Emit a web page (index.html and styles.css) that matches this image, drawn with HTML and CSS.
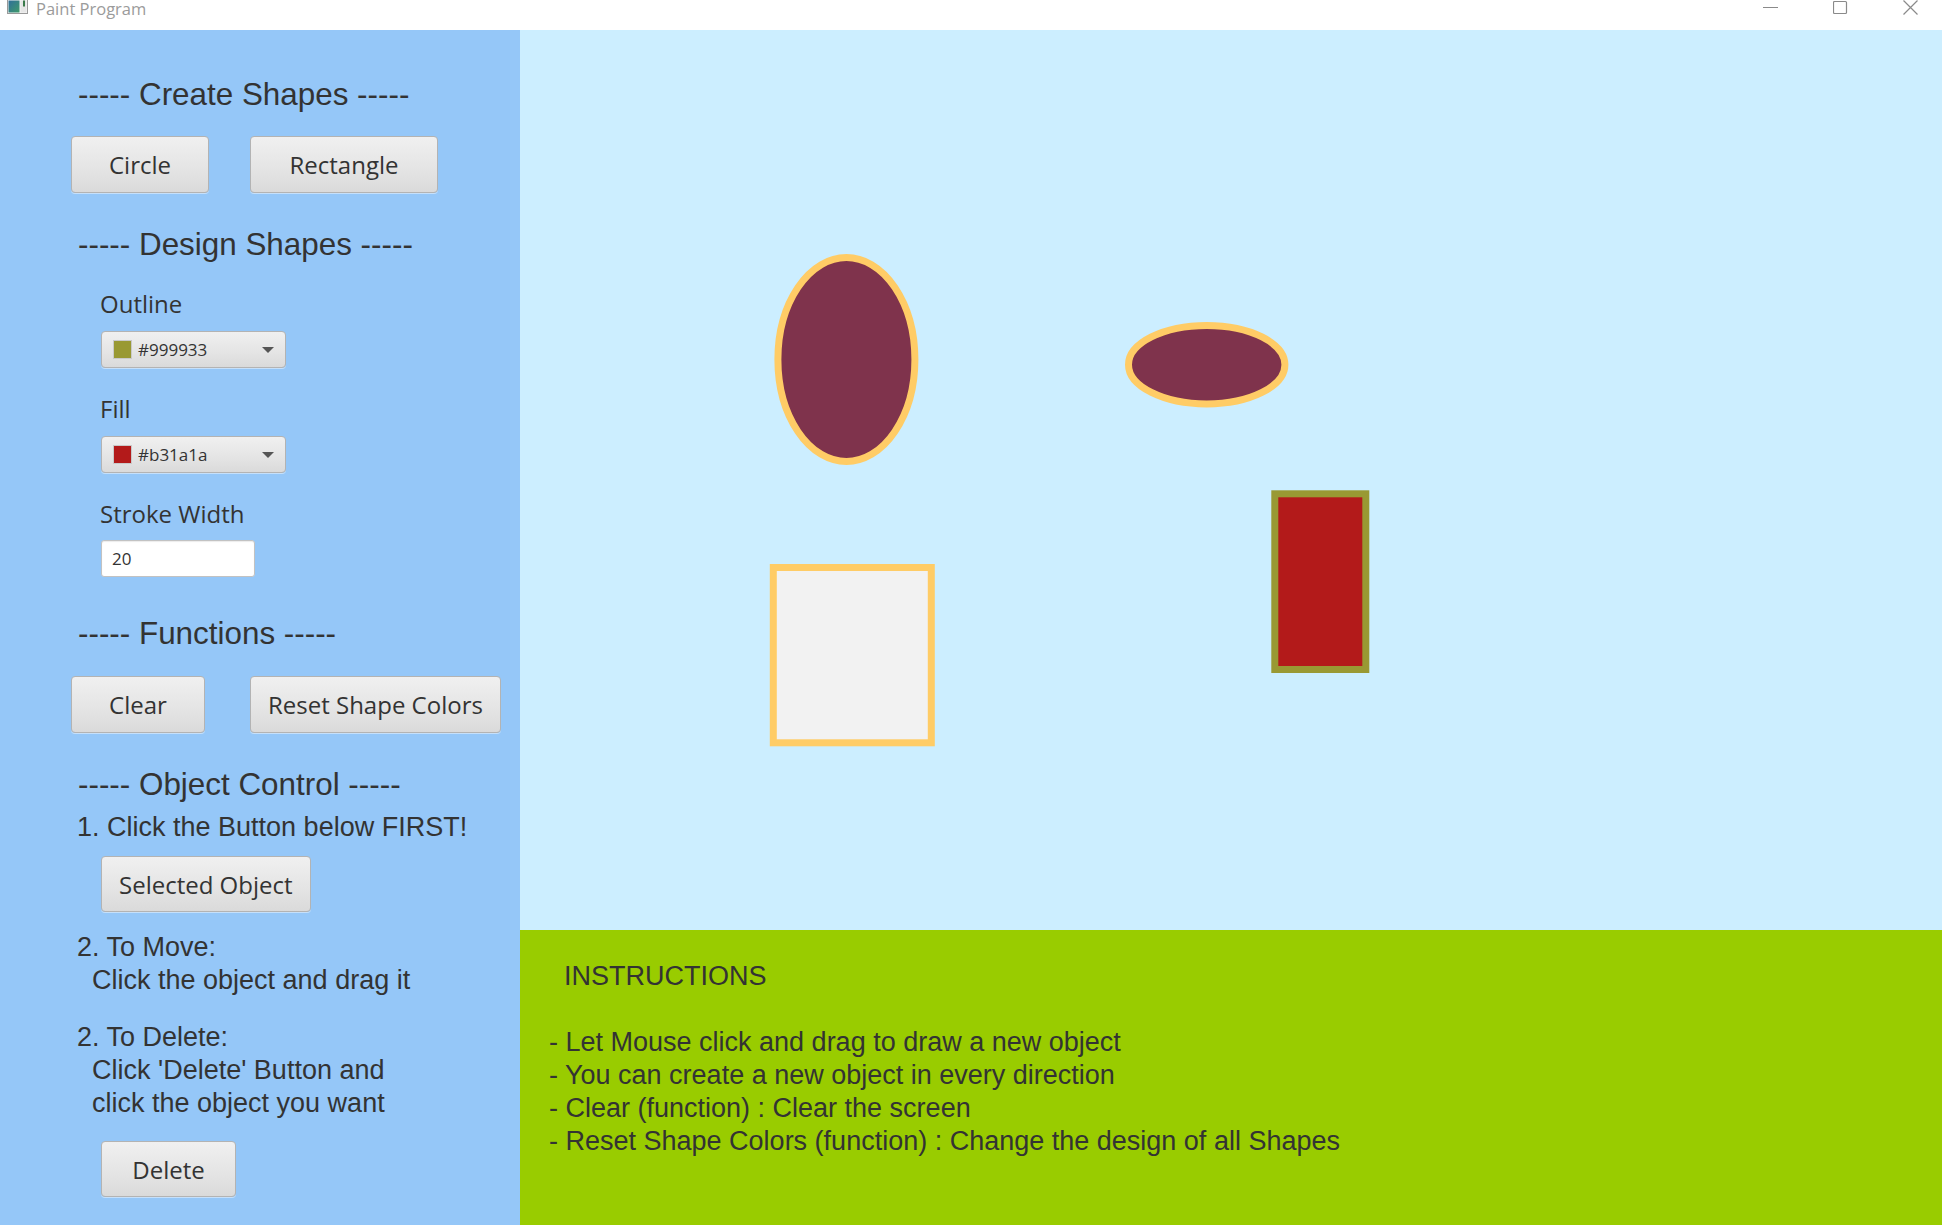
FILE: index.html
```html
<!DOCTYPE html>
<html lang="en">
<head>
<meta charset="utf-8">
<title>Paint Program</title>
<link rel="stylesheet" href="styles.css">
</head>
<body>
<div class="window">
  <header class="titlebar">
    <svg class="app-icon" width="21" height="16" viewBox="0 0 21 16">
      <defs>
        <linearGradient id="ig" x1="0" y1="0" x2="1" y2="1">
          <stop offset="0" stop-color="#2f6f9a"/>
          <stop offset="1" stop-color="#3f9a6a"/>
        </linearGradient>
      </defs>
      <rect x="0.5" y="0.5" width="20" height="14" fill="#f4f4f4" stroke="#9a9a9a"/>
      <rect x="1.5" y="1.5" width="11" height="12" fill="url(#ig)"/>
      <rect x="13.5" y="1.5" width="6" height="12" fill="#e6e6e6"/>
      <rect x="16" y="1.5" width="2" height="6" fill="#3a7a4a"/>
    </svg>
    <span class="title-text">Paint Program</span>
    <div class="window-controls">
      <svg width="15" height="15" viewBox="0 0 15 15"><line x1="0" y1="7.5" x2="15" y2="7.5" stroke="#8a8a8a" stroke-width="1"/></svg>
      <svg width="15" height="15" viewBox="0 0 15 15"><rect x="0.5" y="1.5" width="13" height="12" rx="1" fill="none" stroke="#8a8a8a" stroke-width="1.2"/></svg>
      <svg width="15" height="15" viewBox="0 0 15 15"><path d="M0.5 0.5 L14.5 14.5 M14.5 0.5 L0.5 14.5" stroke="#8a8a8a" stroke-width="1.2"/></svg>
    </div>
  </header>

  <div class="app">
    <aside class="sidebar">
      <h2 class="section-title">----- Create Shapes -----</h2>
      <div class="btn-row gap-create">
        <button class="btn btn-circle">Circle</button>
        <button class="btn btn-rect">Rectangle</button>
      </div>

      <h2 class="section-title gap-design">----- Design Shapes -----</h2>
      <label class="field-label gap-outline">Outline</label>
      <div class="combo gap-combo">
        <span class="swatch swatch-outline"></span>
        <span class="combo-text">#999933</span>
        <span class="combo-arrow"></span>
      </div>
      <label class="field-label gap-field">Fill</label>
      <div class="combo gap-combo">
        <span class="swatch swatch-fill"></span>
        <span class="combo-text">#b31a1a</span>
        <span class="combo-arrow"></span>
      </div>
      <label class="field-label gap-field">Stroke Width</label>
      <div class="textfield gap-text">20</div>

      <h2 class="section-title gap-functions">----- Functions -----</h2>
      <div class="btn-row gap-fbtn">
        <button class="btn btn-clear">Clear</button>
        <button class="btn">Reset Shape Colors</button>
      </div>

      <h2 class="section-title gap-object">----- Object Control -----</h2>
      <p class="step gap-step1">1. Click the Button below FIRST!</p>
      <button class="btn btn-indent gap-selected">Selected Object</button>
      <p class="step gap-move">2. To Move:<br><span class="indent">Click the object and drag it</span></p>
      <p class="step gap-delete">2. To Delete:<br><span class="indent">Click 'Delete' Button and</span><br><span class="indent">click the object you want</span></p>
      <button class="btn btn-indent btn-delete gap-delbtn">Delete</button>
    </aside>

    <main class="workspace">
      <section class="canvas">
        <svg class="drawing" width="1422" height="900" viewBox="0 0 1422 900">
          <ellipse cx="326.4" cy="329.5" rx="68.5" ry="102" fill="#7f334c" stroke="#ffcc66" stroke-width="7"/>
          <ellipse cx="686.7" cy="334.7" rx="78.2" ry="39.2" fill="#7f334c" stroke="#ffcc66" stroke-width="7"/>
          <rect x="253.3" y="537.5" width="158" height="175.3" fill="#f2f2f2" stroke="#ffcc66" stroke-width="7"/>
          <rect x="754.8" y="463.8" width="91" height="175.7" fill="#b31a1a" stroke="#999933" stroke-width="7"/>
        </svg>
      </section>
      <section class="instructions-panel">
        <div class="instructions">
          <div class="instr-title">INSTRUCTIONS</div>
          <div class="instr-blank">&nbsp;</div>
          <div>- Let Mouse click and drag to draw a new object</div>
          <div>- You can create a new object in every direction</div>
          <div>- Clear (function) : Clear the screen</div>
          <div>- Reset Shape Colors (function) : Change the design of all Shapes</div>
        </div>
      </section>
    </main>
  </div>
</div>
</body>
</html>
```

FILE: styles.css
```css
* { box-sizing: border-box; }

html, body {
  margin: 0;
  padding: 0;
}

body {
  width: 1942px;
  height: 1225px;
  overflow: hidden;
  font-family: "Open Sans", "Noto Sans", sans-serif;
  color: #333333;
  background: #ffffff;
}

.window {
  display: flex;
  flex-direction: column;
  height: 1225px;
}

/* ---------- title bar ---------- */
.titlebar {
  height: 30px;
  flex: 0 0 30px;
  background: #ffffff;
  display: flex;
  align-items: flex-start;
  padding-left: 7px;
  padding-right: 24px;
}

.app-icon {
  display: block;
  margin-top: -1px;
}

.title-text {
  margin-left: 8px;
  font-size: 16.5px;
  line-height: 17px;
  color: #9b9b9b;
}

.window-controls {
  margin-left: auto;
  display: flex;
  gap: 55px;
  align-items: flex-start;
}

.window-controls svg {
  display: block;
}

/* ---------- main area ---------- */
.app {
  flex: 1;
  display: grid;
  grid-template-columns: 520px 1fr;
  min-height: 0;
}

.sidebar {
  background: #95c7f8;
  padding-top: 46px;
  display: flex;
  flex-direction: column;
  align-items: flex-start;
}

.section-title {
  margin: 0 0 0 78px;
  font-family: "Liberation Sans", Arial, sans-serif;
  font-weight: normal;
  font-size: 31.4px;
  line-height: 38px;
  color: #333333;
  white-space: nowrap;
}

.btn-row {
  display: grid;
  grid-template-columns: 179px auto;
  margin-left: 71px;
  align-items: start;
}

.btn {
  height: 57px;
  padding: 0 17px;
  font-family: "Open Sans", "Noto Sans", sans-serif;
  font-size: 24px;
  color: #333333;
  background: linear-gradient(to bottom, #f0f0f0 0%, #e4e4e4 60%, #dadada 100%);
  border: 1px solid #b3b3b3;
  border-radius: 4px;
  box-shadow: 0 1px 0 rgba(255, 255, 255, 0.45);
  display: flex;
  align-items: center;
  justify-content: center;
  white-space: nowrap;
}

.btn-circle { width: 138px; }
.btn-rect { width: 188px; }
.btn-clear { width: 134px; }
.btn-indent { margin-left: 101px; }
.btn-delete { width: 135px; height: 56px; }

.field-label {
  display: block;
  margin-left: 100px;
  font-size: 24px;
  line-height: 30px;
  color: #333333;
}

.combo {
  width: 185px;
  height: 37px;
  margin-left: 101px;
  display: flex;
  align-items: center;
  padding: 0 11px;
  background: linear-gradient(to bottom, #f0f0f0 0%, #e4e4e4 60%, #dadada 100%);
  border: 1px solid #b3b3b3;
  border-radius: 4px;
  box-shadow: 0 1px 0 rgba(255, 255, 255, 0.45);
}

.swatch {
  width: 19px;
  height: 19px;
  border: 1px solid #c9c9c9;
  flex: 0 0 19px;
}

.swatch-outline { background: #999933; }
.swatch-fill { background: #b31a1a; }

.combo-text {
  margin-left: 6px;
  font-size: 17px;
  color: #333333;
}

.combo-arrow {
  margin-left: auto;
  width: 0;
  height: 0;
  border-left: 6px solid transparent;
  border-right: 6px solid transparent;
  border-top: 6px solid #555555;
}

.textfield {
  width: 154px;
  height: 37px;
  margin-left: 101px;
  padding-left: 10px;
  display: flex;
  align-items: center;
  font-size: 17px;
  background: #ffffff;
  border: 1px solid #c2c2c2;
  border-radius: 3px;
  box-shadow: inset 0 1px 1px rgba(0, 0, 0, 0.08);
}

.step {
  margin: 0 0 0 77px;
  padding-top: 2px;
  font-family: "Liberation Sans", Arial, sans-serif;
  font-size: 27px;
  line-height: 33px;
  color: #333333;
  white-space: nowrap;
}

.step .indent {
  padding-left: 15px;
}

/* vertical rhythm of the sidebar */
.gap-create { margin-top: 22px; }
.gap-design { margin-top: 33px; }
.gap-outline { margin-top: 25px; }
.gap-combo { margin-top: 12px; }
.gap-field { margin-top: 26px; }
.gap-text { margin-top: 11px; }
.gap-functions { margin-top: 38px; }
.gap-fbtn { margin-top: 23px; }
.gap-object { margin-top: 33px; }
.gap-step1 { margin-top: 5px; }
.gap-selected { margin-top: 12px; height: 56px; }
.gap-move { margin-top: 17px; }
.gap-delete { margin-top: 22px; }
.gap-delbtn { margin-top: 21px; }

/* ---------- workspace ---------- */
.workspace {
  display: flex;
  flex-direction: column;
  min-width: 0;
}

.canvas {
  height: 900px;
  flex: 0 0 900px;
  background: #cceeff;
  overflow: hidden;
}

.drawing {
  display: block;
}

.instructions-panel {
  flex: 1;
  background: #99cc00;
  padding: 30px 0 0 29px;
  overflow: hidden;
}

.instructions {
  font-family: "Liberation Sans", Arial, sans-serif;
  font-size: 27px;
  line-height: 33px;
  color: #333333;
  white-space: nowrap;
}

.instr-title {
  padding-left: 15px;
}
```
